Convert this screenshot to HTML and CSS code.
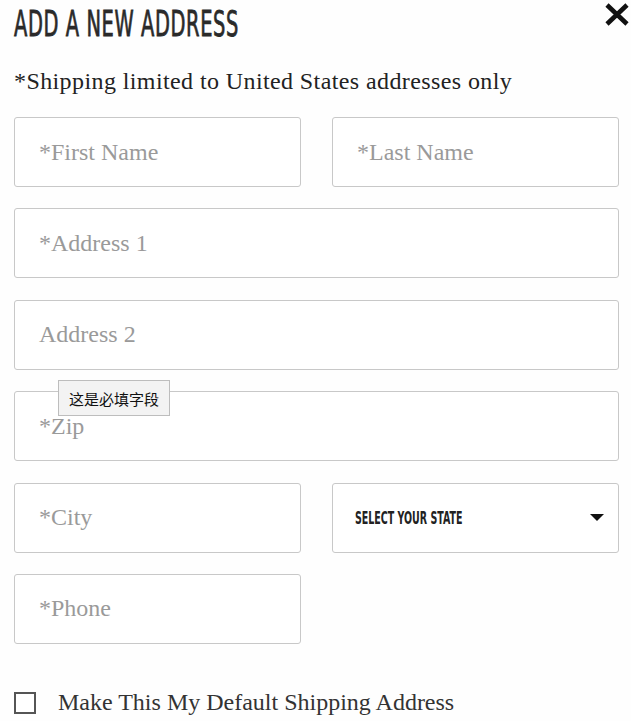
FILE: index.html
```html
<!DOCTYPE html>
<html>
<head>
<meta charset="utf-8">
<link rel="stylesheet" href="styles.css">
</head>
<body>
<div class="modal">
  <div class="header">
    <h1 class="title">ADD A NEW ADDRESS</h1>
    <button class="close" aria-label="Close">
      <svg width="26" height="23" viewBox="0 0 26 23"><path d="M3 2 L23 21 M23 2 L3 21" stroke="#111" stroke-width="4.6" stroke-linecap="butt"/></svg>
    </button>
  </div>
  <p class="note">*Shipping limited to United States addresses only</p>
  <form class="form">
    <div class="row two">
      <div class="field">*First Name</div>
      <div class="field">*Last Name</div>
    </div>
    <div class="row"><div class="field">*Address 1</div></div>
    <div class="row"><div class="field">Address 2</div></div>
    <div class="row zip-row">
      <div class="field">*Zip</div>
      <div class="tooltip">这是必填字段</div>
    </div>
    <div class="row two">
      <div class="field">*City</div>
      <div class="field select"><span class="state">SELECT YOUR STATE</span><span class="caret"></span></div>
    </div>
    <div class="row two">
      <div class="field">*Phone</div>
    </div>
    <label class="check"><span class="box"></span><span class="check-label">Make This My Default Shipping Address</span></label>
  </form>
</div>
</body>
</html>
```
FILE: styles.css
```css
html, body {
  margin: 0;
  padding: 0;
  background: #fefefe;
}
.modal {
  padding: 0 12px 0 14px;
  width: 605px;
  font-family: "Liberation Serif", "Times New Roman", serif;
}
.header {
  display: flex;
  justify-content: space-between;
  align-items: flex-start;
  height: 50px;
}
.title {
  margin: 5px 0 0 0;
  font-family: "DejaVu Sans Condensed", "DejaVu Sans", sans-serif;
  font-weight: normal;
  font-size: 36px;
  line-height: 38px;
  letter-spacing: 1px;
  color: #2a2a2a;
  -webkit-text-stroke: 0.8px #2a2a2a;
  white-space: nowrap;
  transform: scaleX(0.6);
  transform-origin: left center;
}
.close {
  border: 0;
  background: none;
  padding: 0;
  margin: 3px -14px 0 0;
  width: 32px;
  height: 25px;
  cursor: pointer;
}
.note {
  margin: 17px 0 0 0;
  font-size: 24px;
  line-height: 28px;
  letter-spacing: 0.4px;
  color: #222;
}
.form {
  margin-top: 22px;
  display: flex;
  flex-direction: column;
  gap: 21.4px;
}
.row {
  display: grid;
  grid-template-columns: 1fr;
}
.row.two {
  grid-template-columns: 287px 287px;
  column-gap: 31px;
}
.zip-row {
  position: relative;
}
.field {
  box-sizing: border-box;
  height: 70px;
  border: 1px solid #c8c8c8;
  border-radius: 3px;
  background: #fff;
  display: flex;
  align-items: center;
  padding: 0 24px;
  font-size: 24px;
  color: #9a9a9a;
}
.select {
  justify-content: space-between;
  font-family: "DejaVu Sans Condensed", "DejaVu Sans", sans-serif;
  font-weight: bold;
  font-size: 17px;
  color: #222;
  padding: 0 14px 0 22px;
}
.state {
  display: inline-block;
  white-space: nowrap;
  transform: scaleX(0.62);
  transform-origin: left center;
}
.caret {
  width: 0;
  height: 0;
  border-left: 7px solid transparent;
  border-right: 7px solid transparent;
  border-top: 7px solid #111;
}
.tooltip {
  position: absolute;
  left: 44px;
  top: -11px;
  background: #f3f3f3;
  border: 1px solid #bdbdbd;
  padding: 7px 10px 6px 10px;
  font-family: "Noto Sans CJK SC", sans-serif;
  font-size: 15px;
  line-height: 21px;
  color: #111;
}
.check {
  margin-top: 24px;
  display: flex;
  align-items: center;
  gap: 22px;
}
.box {
  box-sizing: border-box;
  width: 22px;
  height: 22px;
  border: 2px solid #555;
  background: #fff;
}
.check-label {
  font-size: 24px;
  color: #333;
}
```
